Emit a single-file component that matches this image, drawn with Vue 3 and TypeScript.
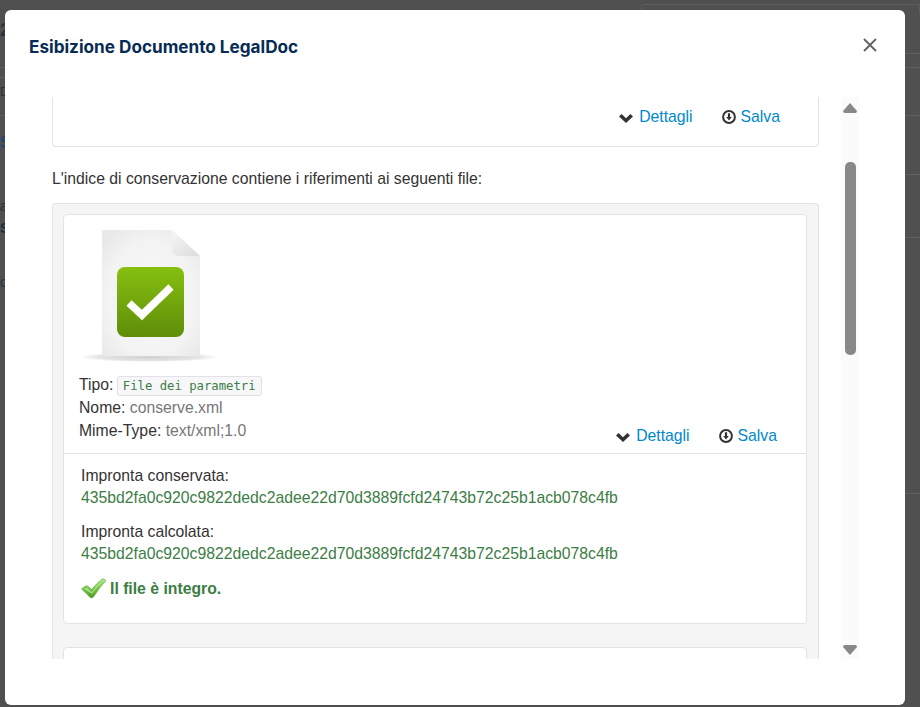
<script setup lang="ts">
const hash = '435bd2fa0c920c9822dedc2adee22d70d3889fcfd24743b72c25b1acb078c4fb'
</script>

<template>
  <div class="page">
    <div class="backdrop-left">
      <span class="bg-a">2</span>
      <span class="bg-line l1"></span>
      <span class="bg-line l2"></span>
      <span class="bg-b">D</span>
      <span class="bg-line l3"></span>
      <span class="bg-c">S</span>
      <span class="bg-d">a</span>
      <span class="bg-e">S</span>
      <span class="bg-f">c</span>
    </div>
    <div class="backdrop-right">
      <span class="bg-tab"></span>
      <span class="r-line r1"></span>
      <span class="r-line r2"></span>
      <span class="r-line r3"></span>
      <span class="r-line r4"></span>
      <span class="r-line r5"></span>
      <span class="r-line r6"></span>
    </div>
    <section class="modal">
      <header class="modal-header">
        <h1>Esibizione Documento LegalDoc</h1>
        <svg class="close" width="16" height="16" viewBox="0 0 16 16" aria-label="Chiudi">
          <path d="M2 2 L14 14 M14 2 L2 14" stroke="#666" stroke-width="2" fill="none" />
        </svg>
      </header>
      <div class="modal-body">
        <div class="scroll-content">
          <div class="top-card">
            <div class="actions">
              <a class="action act-details">
                <svg class="chev" width="14" height="10" viewBox="0 0 14 10"><path d="M0 3.6 L2.6 1 L7 5.2 L11.4 1 L14 3.6 L7 10 Z" fill="#333" /></svg>
                <span>Dettagli</span>
              </a>
              <a class="action act-save">
                <svg class="down" width="14" height="14" viewBox="0 0 14 14"><circle cx="7" cy="7" r="5.9" fill="none" stroke="#333" stroke-width="2" /><path d="M5.9 3.2 H8.1 V7 H9.8 L7 10.6 L4.2 7 H5.9 Z" fill="#333" /></svg>
                <span>Salva</span>
              </a>
            </div>
          </div>
          <p class="intro">L'indice di conservazione contiene i riferimenti ai seguenti file:</p>
          <div class="well">
            <article class="file-card">
              <div class="file-head">
                <svg class="file-icon" width="140" height="134" viewBox="0 0 140 134">
                  <defs>
                    <radialGradient id="paper" cx="0.5" cy="0.55" r="0.65">
                      <stop offset="0" stop-color="#f8f8f8" />
                      <stop offset="0.7" stop-color="#f3f3f3" />
                      <stop offset="1" stop-color="#e9e9e9" />
                    </radialGradient>
                    <linearGradient id="green" x1="0" y1="0" x2="0" y2="1">
                      <stop offset="0" stop-color="#86c010" />
                      <stop offset="1" stop-color="#5f8d09" />
                    </linearGradient>
                    <linearGradient id="fold" x1="0" y1="0" x2="1" y2="1">
                      <stop offset="0" stop-color="#f6f6f6" />
                      <stop offset="1" stop-color="#dcdcdc" />
                    </linearGradient>
                    <radialGradient id="shadow" cx="0.5" cy="0.5" r="0.5">
                      <stop offset="0" stop-color="#d0d0d0" />
                      <stop offset="0.72" stop-color="#e4e4e4" />
                      <stop offset="1" stop-color="#ffffff" />
                    </radialGradient>
                  </defs>
                  <ellipse cx="70" cy="127" rx="70" ry="5" fill="url(#shadow)" />
                  <path d="M23 0 H93 L121 26 V126 H23 Z" fill="url(#paper)" />
                  <path d="M93 0 L121 26 H100 Q93 26 93 19 Z" fill="url(#fold)" />
                  <rect x="38" y="37" width="67" height="70" rx="8" fill="url(#green)" />
                  <path d="M50 73 L63 85 L92 57" fill="none" stroke="#fff" stroke-width="7.5" />
                </svg>
                <div class="file-row">
                  <div class="meta">
                    <div class="tipo"><b>Tipo:</b> <code>File dei parametri</code></div>
                    <div class="nome"><b>Nome:</b> <i>conserve.xml</i></div>
                    <div class="mime"><b>Mime-Type:</b> <i>text/xml;1.0</i></div>
                  </div>
                  <div class="actions inner">
                    <a class="action act-details">
                      <svg class="chev" width="14" height="10" viewBox="0 0 14 10"><path d="M0 3.6 L2.6 1 L7 5.2 L11.4 1 L14 3.6 L7 10 Z" fill="#333" /></svg>
                      <span>Dettagli</span>
                    </a>
                    <a class="action act-save">
                      <svg class="down" width="14" height="14" viewBox="0 0 14 14"><circle cx="7" cy="7" r="5.9" fill="none" stroke="#333" stroke-width="2" /><path d="M5.9 3.2 H8.1 V7 H9.8 L7 10.6 L4.2 7 H5.9 Z" fill="#333" /></svg>
                      <span>Salva</span>
                    </a>
                  </div>
                </div>
              </div>
              <div class="file-foot">
                <div class="label">Impronta conservata:</div>
                <div class="hash">{{ hash }}</div>
                <div class="label second">Impronta calcolata:</div>
                <div class="hash">{{ hash }}</div>
                <div class="ok">
                  <svg width="26" height="21" viewBox="0 0 26 21">
                    <defs>
                      <linearGradient id="tick" x1="0" y1="0" x2="0" y2="1">
                        <stop offset="0" stop-color="#b4e88a" />
                        <stop offset="0.55" stop-color="#6cc23a" />
                        <stop offset="1" stop-color="#4c9a22" />
                      </linearGradient>
                    </defs>
                    <path d="M0.5 11 L4.5 8 Q6 7.4 7.5 8.6 L10.5 11.5 Q16 5 21 1 Q23 0 25 2.5 Q18 10 12.5 19 Q11 20.8 9 19.4 Q5 15 0.5 11 Z" fill="url(#tick)" stroke="#7fb566" stroke-width=".7" />
                    <path d="M3 11 L6 9.6 L10.6 14 Q16 7 22 2.4 Q17 8 11 16 Z" fill="#d6f5bd" fill-opacity=".55" />
                  </svg>
                  <strong>Il file è integro.</strong>
                </div>
              </div>
            </article>
            <article class="file-card next"></article>
          </div>
        </div>
        <div class="scrollbar">
          <svg class="arrow" width="14" height="10" viewBox="0 0 14 10"><path d="M7 0 L14 8 Q14 10 12 10 H2 Q0 10 0 8 Z" fill="#888" /></svg>
          <div class="track"><div class="thumb"></div></div>
          <svg class="arrow" width="14" height="10" viewBox="0 0 14 10"><path d="M7 10 L14 2 Q14 0 12 0 H2 Q0 0 0 2 Z" fill="#888" /></svg>
        </div>
      </div>
    </section>
  </div>
</template>

<style>
html, body { margin: 0; padding: 0; }
</style>

<style scoped>
.page {
  position: relative;
  width: 920px;
  height: 707px;
  box-sizing: border-box;
  padding: 10px 15px 2px 5px;
  background: #505050;
  overflow: hidden;
  font-family: "Liberation Sans", Arial, sans-serif;
  font-size: 15.75px;
  color: #333;
}
.backdrop-left { position: absolute; left: 0; top: 0; width: 5px; height: 100%; color: #27333d; font-size: 14px; }
.backdrop-left span { position: absolute; left: 0; }
.bg-a { top: 20px; font-weight: bold; font-size: 18px; }
.bg-b { top: 85px; font-size: 12px; }
.bg-c { top: 134px; color: #24466a; font-weight: bold; font-size: 16px; }
.bg-d { top: 198px; }
.bg-e { top: 220px; font-weight: bold; color: #1d2d3d; }
.bg-f { top: 274px; }
.bg-line { height: 1px; width: 5px; background: #5f5f5f; }
.l1 { top: 67px; } .l2 { top: 77px; } .l3 { top: 115px; }
.backdrop-right { position: absolute; left: 0; top: 0; width: 100%; height: 100%; }
.bg-tab { position: absolute; left: 641px; top: 4px; width: 279px; height: 10px; border: 1px solid #5d5d5d; border-bottom: 0; border-radius: 4px 0 0 0; box-sizing: border-box; }
.r-line { position: absolute; left: 905px; width: 15px; height: 1px; background: #616161; }
.r1 { top: 53px; } .r2 { top: 67px; } .r3 { top: 115px; } .r4 { top: 174px; } .r5 { top: 237px; } .r6 { top: 493px; }

.modal {
  position: relative;
  width: 900px;
  height: 695px;
  background: #fff;
  border-radius: 6px;
  display: flex;
  flex-direction: column;
}
.modal-header {
  height: 87px;
  flex: none;
  box-sizing: border-box;
  padding: 27px 27px 0 24px;
  display: flex;
  justify-content: space-between;
  align-items: flex-start;
}
h1 {
  margin: 0;
  font-family: Inter, sans-serif;
  font-size: 17.15px;
  line-height: 20px;
  font-weight: 700;
  color: #072c54;
}
.modal-body {
  height: 562px;
  display: flex;
  padding-left: 47px;
  gap: 22px;
}
.scroll-content { width: 767px; height: 562px; overflow: hidden; }
.top-card {
  height: 50px;
  box-sizing: border-box;
  border: 1px solid #e3e3e3;
  border-top: 0;
  border-radius: 0 0 4px 4px;
  padding: 10px 38px 0 0;
}
.actions { display: flex; justify-content: flex-end; gap: 29px; }
.action { display: flex; align-items: center; color: #0088cc; line-height: 20px; }
.act-details { gap: 6px; }
.act-save { gap: 5px; }
.chev { margin-top: 2px; }
.intro { margin: 22px 0 0; line-height: 20px; height: 34px; color: #333; }
.well {
  background: #f5f5f5;
  border: 1px solid #e3e3e3;
  border-bottom: 0;
  border-radius: 4px 4px 0 0;
  padding: 10px 11px 0 10px;
  height: 600px;
  box-sizing: border-box;
}
.file-card { background: #fff; border: 1px solid #e3e3e3; border-radius: 4px; height: 410px; box-sizing: border-box; }
.file-card.next { margin-top: 23px; height: 100px; }
.file-head { height: 239px; box-sizing: border-box; padding: 15px 0 0 15px; border-bottom: 1px solid #e3e3e3; }
.file-icon { display: block; }
.file-row { display: flex; justify-content: space-between; margin-top: 10px; }
.meta { line-height: 22px; }
.meta b { font-weight: normal; color: #333; }
.meta i { font-style: normal; color: #777; }
.tipo { height: 23px; }
.nome { height: 23px; }
code {
  font-family: "DejaVu Sans Mono", monospace;
  font-size: 12.25px;
  color: #3c7d45;
  background: #f7f7f9;
  border: 1px solid #e1e1e8;
  border-radius: 3px;
  padding: 2px 5px;
  margin-left: -1px;
}
.actions.inner { padding: 52px 29px 0 0; }
.file-foot { padding: 11px 17px 0; line-height: 20px; }
.label { color: #333; line-height: 22px; }
.label.second { margin-top: 12px; }
.hash { color: #3c7d45; line-height: 22px; }
.ok { display: flex; align-items: center; gap: 3px; margin-top: 13px; color: #3c7d45; }
.ok strong { font-weight: 700; }
.scrollbar {
  width: 18px;
  height: 562px;
  background: #fbfbfb;
  display: flex;
  flex-direction: column;
  align-items: center;
  position: relative;
}
.arrow { flex: none; margin: 6px 0 0; }
.arrow:last-child { margin: 0 0 4px; }
.track { flex: 1; width: 100%; position: relative; }
.thumb { position: absolute; left: 4px; top: 49px; width: 11px; height: 193px; border-radius: 5px; background: #888; }
</style>
